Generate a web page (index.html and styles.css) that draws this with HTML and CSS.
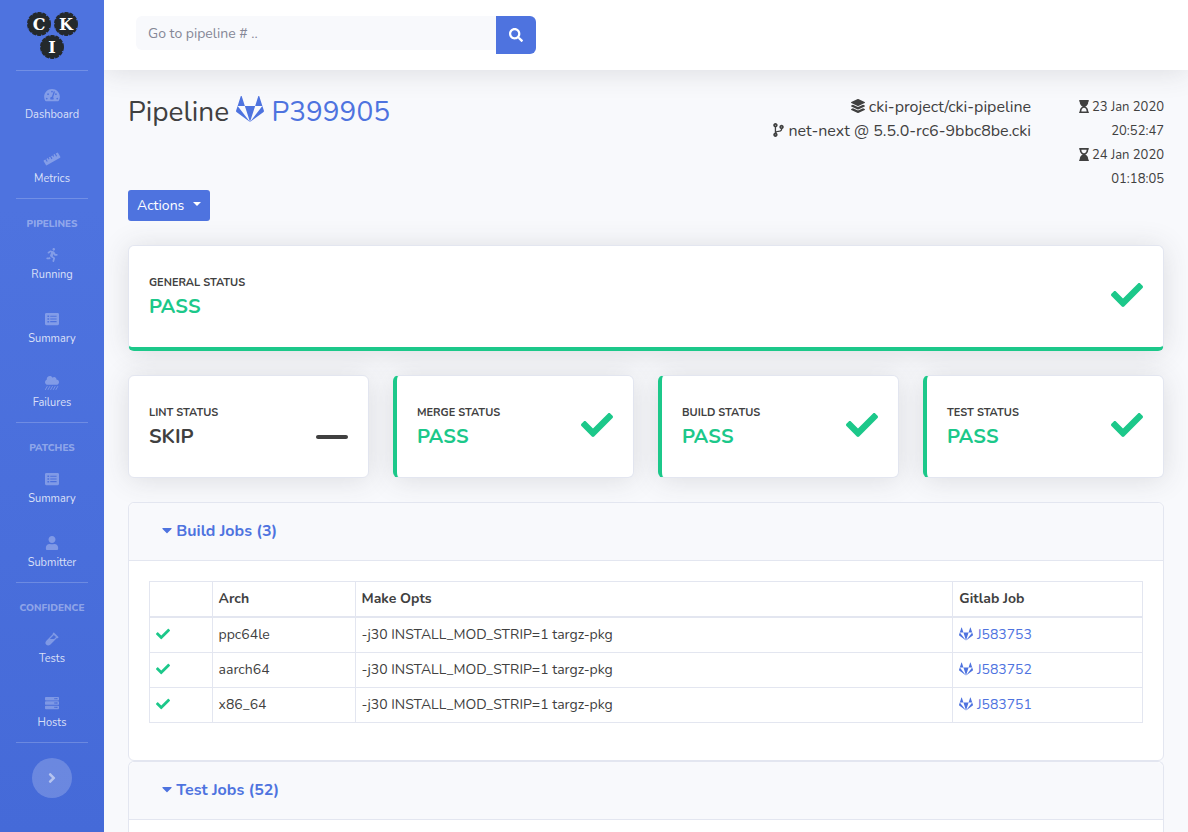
FILE: index.html
```html
<!DOCTYPE html>
<html lang="en">
<head>
    <meta charset="UTF-8">
    <meta name="viewport" content="width=device-width, initial-scale=1.0">
    <title>CKI - Pipeline P399905</title>
    <link rel="stylesheet" href="styles.css">
</head>
<body>
    <!-- Shared icons -->
    <svg class="sprite" aria-hidden="true">
        <symbol id="check" viewBox="0 0 512 512"><path d="M173.898 439.404l-166.4-166.4c-9.997-9.997-9.997-26.206 0-36.204l36.203-36.204c9.997-9.998 26.207-9.998 36.204 0L192 312.69 432.095 72.596c9.997-9.997 26.207-9.997 36.204 0l36.203 36.204c9.997 9.997 9.997 26.206 0 36.204l-294.4 294.401c-9.998 9.997-26.207 9.997-36.204-.001z"/></symbol>
        <symbol id="minimize" viewBox="0 0 512 512"><path d="M480 480H32c-17.700 0-32-14.300-32-32s14.300-32 32-32h448c17.700 0 32 14.300 32 32s-14.300 32-32 32z"/></symbol>
        <symbol id="gitlab" viewBox="0 0 512 512"><path d="M29.782 199.732L256 493.714 8.074 309.699c-6.856-5.142-9.712-13.996-7.141-21.993l28.849-87.974zm75.405-174.806c-3.142-8.854-15.709-8.854-18.851 0L29.782 199.732h131.961L105.187 24.926zm56.556 174.806L256 493.714l94.257-293.982H161.743zm349.324 87.974l-28.849-87.974L256 493.714l247.926-184.015c6.855-5.142 9.711-13.996 7.141-21.993zm-85.404-262.78c-3.142-8.854-15.709-8.854-18.851 0l-56.555 174.806h131.961L425.663 24.926z"/></symbol>
        <symbol id="caret" viewBox="0 0 320 512"><path d="M31.300 192h257.300c17.800 0 26.700 21.500 14.100 34.100L174.100 354.800c-7.800 7.800-20.500 7.800-28.300 0L17.200 226.100C4.600 213.500 13.500 192 31.300 192z"/></symbol>
        <symbol id="list" viewBox="0 0 512 512"><path fill-rule="evenodd" d="M464 480H48c-26.510 0-48-21.490-48-48V80c0-26.510 21.490-48 48-48h416c26.510 0 48 21.490 48 48v352c0 26.510-21.490 48-48 48zM88 130h64v54H88zM88 228h64v54H88zM88 326h64v54H88zM192 136h232v42H192zM192 234h232v42H192zM192 332h232v42H192z"/></symbol>
    </svg>

    <div class="wrapper">
        <nav class="sidebar">
            <a class="brand" href="#" aria-label="CKI">
                <svg width="52" height="48" viewBox="0 0 52 48">
                    <g class="brand-disc">
                        <circle cx="13" cy="12" r="11"/>
                        <circle cx="40" cy="12" r="11"/>
                        <circle cx="26" cy="35" r="11"/>
                    </g>
                    <g class="brand-letter">
                        <text x="13" y="18">C</text>
                        <text x="40" y="18">K</text>
                        <text x="26" y="41">I</text>
                    </g>
                </svg>
            </a>
            <hr>
            <a class="nav-item" href="#">
                <svg class="icon wide" viewBox="0 0 576 512"><path fill-rule="evenodd" d="M288 32C129 32 0 161 0 320c0 53 14 102 39 145 6 9 16 15 27 15h444c11 0 21-6 27-15 25-43 39-92 39-145C576 161 447 32 288 32zM288 96a32 32 0 1 1 0 64a32 32 0 1 1 0-64zM96 352a32 32 0 1 1 0 64a32 32 0 1 1 0-64zM144 192a32 32 0 1 1 0 64a32 32 0 1 1 0-64zM391 151l-61 184c21 15 28 49 13 81H233c-26-48 2-90 51-95l61-185c9-27 54-13 46 15zM432 192a32 32 0 1 1 0 64a32 32 0 1 1 0-64zM480 352a32 32 0 1 1 0 64a32 32 0 1 1 0-64z"/></svg>
                <span>Dashboard</span>
            </a>
            <a class="nav-item" href="#">
                <svg class="icon wider" viewBox="0 0 640 512"><path transform="rotate(-30 320 256)" d="M40 150h62v100h42V150h58v60h42v-60h56v100h42V150h56v60h42v-60h56v100h42V150h62q24 0 24 24v164q0 24-24 24H40q-24 0-24-24V174q0-24 24-24z"/></svg>
                <span>Metrics</span>
            </a>
            <hr>
            <div class="nav-heading">Pipelines</div>
            <a class="nav-item" href="#">
                <svg class="icon" viewBox="0 0 416 512"><path d="M272 96c26.510 0 48-21.490 48-48S298.510 0 272 0s-48 21.490-48 48 21.490 48 48 48zM113.690 317.470l-14.800 34.520H32c-17.670 0-32 14.330-32 32s14.330 32 32 32h77.450c19.250 0 36.580-11.440 44.110-29.090l8.790-20.520-10.670-6.300c-17.320-10.230-30.060-25.370-37.990-42.610zM384 223.990h-44.030l-26.060-53.250c-12.500-25.550-35.450-44.230-61.780-50.940l-71.080-21.140c-28.300-6.800-57.770-.55-80.840 17.140l-39.670 30.410c-14.030 10.750-16.690 30.830-5.920 44.860s30.840 16.660 44.860 5.920l39.690-30.410c7.670-5.890 17.440-8 25.270-6.140l14.700 4.370-37.460 87.390c-12.620 29.480-1.310 64.010 26.300 80.310l84.980 50.170-27.470 87.730c-5.280 16.860 4.110 34.820 20.970 40.090 3.190 1 6.410 1.480 9.580 1.480 13.610 0 26.230-8.770 30.520-22.450l31.640-101.060c5.910-20.770-2.890-43.080-21.640-54.390l-61.240-36.140 31.310-78.280 20.270 41.430c8 16.340 24.920 26.890 43.110 26.890H384c17.670 0 32-14.330 32-32s-14.330-31.990-32-31.990z"/></svg>
                <span>Running</span>
            </a>
            <a class="nav-item" href="#">
                <svg class="icon"><use href="#list"/></svg>
                <span>Summary</span>
            </a>
            <a class="nav-item" href="#">
                <svg class="icon" viewBox="0 0 512 512"><path d="M416 128c-.6 0-1.100.2-1.600.2 1.100-5.200 1.600-10.600 1.600-16.200 0-44.200-35.800-80-80-80-24.600 0-46.300 11.300-61 28.800C256.400 24.800 219.300 0 176 0 114.100 0 64 50.100 64 112c0 7.300.8 14.300 2.100 21.200C27.800 145.800 0 181.500 0 224c0 53 43 96 96 96h320c53 0 96-43 96-96s-43-96-96-96z"/><path class="rain" d="M80 384L16 496M176 384l-64 112M272 384l-64 112M368 384l-64 112M464 384l-64 112"/></svg>
                <span>Failures</span>
            </a>
            <hr>
            <div class="nav-heading">Patches</div>
            <a class="nav-item" href="#">
                <svg class="icon"><use href="#list"/></svg>
                <span>Summary</span>
            </a>
            <a class="nav-item" href="#">
                <svg class="icon" viewBox="0 0 448 512"><path d="M224 256c70.700 0 128-57.300 128-128S294.700 0 224 0 96 57.300 96 128s57.300 128 128 128zm89.600 32h-16.700c-22.200 10.200-46.900 16-72.900 16s-50.600-5.800-72.900-16h-16.700C60.200 288 0 348.200 0 422.400V464c0 26.500 21.500 48 48 48h352c26.500 0 48-21.500 48-48v-41.600c0-74.200-60.200-134.400-134.400-134.400z"/></svg>
                <span>Submitter</span>
            </a>
            <hr>
            <div class="nav-heading">Confidence</div>
            <a class="nav-item" href="#">
                <svg class="icon" viewBox="0 0 480 512"><path d="M477.700 186.100L309.500 18.300c-3.100-3.100-8.200-3.100-11.300 0l-34 33.900c-3.100 3.100-3.100 8.200 0 11.300l11.200 11.100L33 316.500c-38.800 38.700-45.100 102-9.400 143.500 20.600 24 49.500 36 78.400 35.900 26.400 0 52.800-10 72.900-30.100l246.300-245.700 11.200 11.100c3.100 3.100 8.200 3.100 11.300 0l34-33.900c3.100-3 3.100-8.100 0-11.200zM318 256H161l148-147.700 78.500 78.300L318 256z"/></svg>
                <span>Tests</span>
            </a>
            <a class="nav-item" href="#">
                <svg class="icon" viewBox="0 0 512 512"><path fill-rule="evenodd" d="M32 32h448q32 0 32 32v64q0 32-32 32H32q-32 0-32-32V64q0-32 32-32zM32 192h448q32 0 32 32v64q0 32-32 32H32q-32 0-32-32v-64q0-32 32-32zM32 352h448q32 0 32 32v64q0 32-32 32H32q-32 0-32-32v-64q0-32 32-32zM344 72h48v48h-48zM408 72h48v48h-48zM344 232h48v48h-48zM408 232h48v48h-48zM344 392h48v48h-48zM408 392h48v48h-48z"/></svg>
                <span>Hosts</span>
            </a>
            <hr>
            <button class="sidebar-toggle" type="button" aria-label="Toggle sidebar">
                <svg class="icon" viewBox="0 0 256 512"><path d="M224.300 273l-136 136c-9.400 9.400-24.600 9.400-33.900 0l-22.600-22.600c-9.400-9.400-9.400-24.600 0-33.900l96.400-96.400-96.400-96.400c-9.400-9.400-9.400-24.600 0-33.900L54.300 103c9.400-9.400 24.600-9.400 33.900 0l136 136c9.500 9.400 9.500 24.600.1 34z"/></svg>
            </button>
        </nav>

        <div class="content">
            <header class="topbar">
                <form class="search">
                    <input type="text" placeholder="Go to pipeline # .." aria-label="Go to pipeline">
                    <button type="submit" aria-label="Search">
                        <svg class="icon" viewBox="0 0 512 512"><path d="M505 442.700L405.300 343c-4.500-4.500-10.600-7-17-7H372c27.600-35.300 44-79.700 44-128C416 93.100 322.900 0 208 0S0 93.100 0 208s93.100 208 208 208c48.300 0 92.700-16.400 128-44v16.300c0 6.400 2.500 12.500 7 17l99.700 99.700c9.400 9.400 24.600 9.400 33.900 0l28.300-28.300c9.400-9.400 9.400-24.600.1-34zM208 336c-70.700 0-128-57.200-128-128 0-70.700 57.200-128 128-128 70.700 0 128 57.200 128 128 0 70.700-57.200 128-128 128z"/></svg>
                    </button>
                </form>
            </header>

            <main class="page">
                <div class="page-header">
                    <h1>Pipeline <a href="#"><svg class="icon"><use href="#gitlab"/></svg> P399905</a></h1>
                    <div class="project">
                        <div><svg class="icon" viewBox="0 0 512 512"><path d="M12.410 148.020l232.940 105.670c6.800 3.090 14.490 3.090 21.290 0l232.940-105.670c16.550-7.510 16.550-32.520 0-40.030L266.650 2.310a25.607 25.607 0 0 0-21.290 0L12.410 107.980c-16.550 7.510-16.550 32.530 0 40.040zm487.180 88.280l-58.090-26.330-161.640 73.270c-7.560 3.430-15.590 5.170-23.860 5.170s-16.290-1.740-23.860-5.170L70.510 209.970l-58.100 26.330c-16.550 7.500-16.550 32.500 0 40l232.940 105.590c6.800 3.080 14.490 3.080 21.290 0L499.590 276.300c16.550-7.500 16.550-32.500 0-40zm0 127.800l-57.870-26.230-161.860 73.370c-7.560 3.430-15.590 5.170-23.860 5.170s-16.290-1.740-23.860-5.170L70.290 337.870 12.410 364.100c-16.550 7.500-16.550 32.500 0 40l232.940 105.590c6.800 3.080 14.490 3.080 21.290 0L499.590 404.100c16.550-7.500 16.550-32.500 0-40z"/></svg> cki-project/cki-pipeline</div>
                        <div><svg class="icon narrow" viewBox="0 0 384 512"><path d="M384 144c0-44.200-35.800-80-80-80s-80 35.800-80 80c0 36.400 24.300 67.100 57.500 76.800-.6 16.100-4.200 28.500-11 36.900-15.400 19.200-49.300 22.400-85.200 25.700-28.200 2.600-57.400 5.400-81.300 16.900v-144c32.500-10.200 56-40.500 56-76.300 0-44.200-35.800-80-80-80S0 35.800 0 80c0 35.800 23.500 66.100 56 76.300v199.300C23.500 365.900 0 396.200 0 432c0 44.200 35.800 80 80 80s80-35.800 80-80c0-34-21.200-63.100-51.200-74.600 3.100-5.200 7.800-9.800 14.900-13.400 16.200-8.200 40.400-10.400 66.100-12.800 42.200-3.900 90-8.400 118.200-43.400 14-17.400 21.100-39.800 21.600-67.900 31.600-10.800 54.400-40.700 54.400-75.900zM80 64c8.800 0 16 7.200 16 16s-7.200 16-16 16-16-7.200-16-16 7.200-16 16-16zm0 384c-8.800 0-16-7.200-16-16s7.200-16 16-16 16 7.200 16 16-7.200 16-16 16zm224-320c8.800 0 16 7.200 16 16s-7.200 16-16 16-16-7.200-16-16 7.200-16 16-16z"/></svg> net-next @ 5.5.0-rc6-9bbc8be.cki</div>
                    </div>
                    <div class="dates">
                        <div><svg class="icon narrow" viewBox="0 0 384 512"><path fill-rule="evenodd" d="M360 0H24C10.745 0 0 10.745 0 24v16c0 13.255 10.745 24 24 24 0 90.965 51.016 167.734 120.842 192C75.016 280.266 24 357.035 24 448c-13.255 0-24 10.745-24 24v16c0 13.255 10.745 24 24 24h336c13.255 0 24-10.745 24-24v-16c0-13.255-10.745-24-24-24 0-90.965-51.016-167.734-120.842-192C308.984 231.734 360 154.965 360 64c13.255 0 24-10.745 24-24V24c0-13.255-10.745-24-24-24zm-64 448H88c0-77.458 46.204-144 104-144 57.786 0 104 66.517 104 144z"/></svg> 23 Jan 2020 20:52:47</div>
                        <div><svg class="icon narrow" viewBox="0 0 384 512"><path fill-rule="evenodd" d="M360 0H24C10.745 0 0 10.745 0 24v16c0 13.255 10.745 24 24 24 0 90.965 51.016 167.734 120.842 192C75.016 280.266 24 357.035 24 448c-13.255 0-24 10.745-24 24v16c0 13.255 10.745 24 24 24h336c13.255 0 24-10.745 24-24v-16c0-13.255-10.745-24-24-24 0-90.965-51.016-167.734-120.842-192C308.984 231.734 360 154.965 360 64c13.255 0 24-10.745 24-24V24c0-13.255-10.745-24-24-24zm-64 64c0 77.458-46.204 144-104 144-57.786 0-104-66.517-104-144h208z"/></svg> 24 Jan 2020 01:18:05</div>
                    </div>
                </div>

                <button class="actions" type="button">Actions</button>

                <div class="card status general">
                    <div>
                        <div class="label">General status</div>
                        <div class="value pass">Pass</div>
                    </div>
                    <svg class="status-icon pass"><use href="#check"/></svg>
                </div>

                <div class="status-row">
                    <div class="card status">
                        <div>
                            <div class="label">Lint status</div>
                            <div class="value">Skip</div>
                        </div>
                        <svg class="status-icon"><use href="#minimize"/></svg>
                    </div>
                    <div class="card status passed">
                        <div>
                            <div class="label">Merge status</div>
                            <div class="value pass">Pass</div>
                        </div>
                        <svg class="status-icon pass"><use href="#check"/></svg>
                    </div>
                    <div class="card status passed">
                        <div>
                            <div class="label">Build status</div>
                            <div class="value pass">Pass</div>
                        </div>
                        <svg class="status-icon pass"><use href="#check"/></svg>
                    </div>
                    <div class="card status passed">
                        <div>
                            <div class="label">Test status</div>
                            <div class="value pass">Pass</div>
                        </div>
                        <svg class="status-icon pass"><use href="#check"/></svg>
                    </div>
                </div>

                <section class="card jobs">
                    <h2 class="card-header"><a href="#"><svg class="icon caret"><use href="#caret"/></svg> Build Jobs (3)</a></h2>
                    <div class="card-body">
                        <table>
                            <thead>
                                <tr>
                                    <th class="col-result"></th>
                                    <th class="col-arch">Arch</th>
                                    <th>Make Opts</th>
                                    <th class="col-job">Gitlab Job</th>
                                </tr>
                            </thead>
                            <tbody>
                                <tr>
                                    <td><svg class="icon pass"><use href="#check"/></svg></td>
                                    <td>ppc64le</td>
                                    <td>-j30 INSTALL_MOD_STRIP=1 targz-pkg</td>
                                    <td><a href="#"><svg class="icon"><use href="#gitlab"/></svg> J583753</a></td>
                                </tr>
                                <tr>
                                    <td><svg class="icon pass"><use href="#check"/></svg></td>
                                    <td>aarch64</td>
                                    <td>-j30 INSTALL_MOD_STRIP=1 targz-pkg</td>
                                    <td><a href="#"><svg class="icon"><use href="#gitlab"/></svg> J583752</a></td>
                                </tr>
                                <tr>
                                    <td><svg class="icon pass"><use href="#check"/></svg></td>
                                    <td>x86_64</td>
                                    <td>-j30 INSTALL_MOD_STRIP=1 targz-pkg</td>
                                    <td><a href="#"><svg class="icon"><use href="#gitlab"/></svg> J583751</a></td>
                                </tr>
                            </tbody>
                        </table>
                    </div>
                </section>

                <section class="card jobs last">
                    <h2 class="card-header"><a href="#"><svg class="icon caret"><use href="#caret"/></svg> Test Jobs (52)</a></h2>
                </section>
            </main>
        </div>
    </div>
</body>
</html>
```
FILE: styles.css
```css
* {
    box-sizing: border-box;
}
body {
    margin: 0;
    font-family: Nunito, Lato, sans-serif;
    font-size: 16px;
    line-height: 24px;
    color: #404040;
    background: #f8f9fc;
}
a {
    color: #4e73df;
    text-decoration: none;
}
button, input {
    font-family: inherit;
    border: none;
}
.sprite {
    display: none;
}
.icon {
    width: 1em;
    height: 1em;
    fill: currentColor;
    vertical-align: -2px;
}
.icon.narrow {
    width: 10px;
}
.pass {
    color: #1cc88a;
}
.wrapper {
    display: flex;
    min-height: 100vh;
}

/* Sidebar */
.sidebar {
    position: relative;
    z-index: 1;
    display: flex;
    flex-direction: column;
    align-items: center;
    flex: 0 0 104px;
    background: linear-gradient(180deg, #4e73df 25%, #456ad8 100%);
}
.sidebar hr {
    width: 72px;
    margin: -1px 0 0;
    border: none;
    border-top: 1px solid rgba(255, 255, 255, 0.2);
}
.brand {
    display: flex;
    align-items: center;
    height: 71px;
}
.brand-disc {
    fill: #24292c;
    stroke: #24292c;
    stroke-width: 2;
    stroke-dasharray: 4 1;
}
.brand-letter {
    font-family: "DejaVu Serif", serif;
    font-size: 16px;
    font-weight: bold;
    fill: #fff;
    text-anchor: middle;
}
.nav-item {
    display: flex;
    flex-direction: column;
    align-items: center;
    gap: 4px;
    height: 64px;
    padding-top: 17px;
    font-size: 11px;
    line-height: 18px;
    color: rgba(255, 255, 255, 0.8);
}
.nav-item .icon {
    width: 14px;
    height: 14px;
    color: rgba(255, 255, 255, 0.3);
}
.nav-item .icon.wide {
    width: 16px;
}
.nav-item .icon.wider {
    width: 18px;
}
.rain {
    stroke: currentColor;
    stroke-width: 32;
    stroke-linecap: round;
}
.nav-heading {
    height: 32px;
    padding-top: 16px;
    font-size: 10px;
    line-height: 18px;
    font-weight: 800;
    text-transform: uppercase;
    color: rgba(255, 255, 255, 0.4);
}
.sidebar-toggle {
    display: flex;
    align-items: center;
    justify-content: center;
    width: 40px;
    height: 40px;
    margin: 15px 0;
    padding: 0;
    font-size: 16px;
    color: rgba(255, 255, 255, 0.5);
    background: rgba(255, 255, 255, 0.2);
    border-radius: 50%;
}

/* Top bar */
.content {
    display: flex;
    flex-direction: column;
    flex: 1;
    min-width: 0;
}
.topbar {
    height: 70px;
    padding: 16px 32px;
    background: #fff;
    box-shadow: 0 2px 28px rgba(58, 59, 69, 0.15);
}
.search {
    display: flex;
    align-items: flex-start;
    max-width: 400px;
}
.search input {
    flex: 1;
    min-width: 0;
    height: 34px;
    padding: 0 12px;
    font-size: 14px;
    background: #f8f9fc;
    border-radius: 6px 0 0 6px;
}
.search input::placeholder {
    color: #858796;
}
.search button {
    width: 40px;
    height: 38px;
    padding: 0;
    font-size: 14px;
    color: #fff;
    background: #4e73df;
    border-radius: 0 6px 6px 0;
}

/* Page */
.page {
    display: flex;
    flex-direction: column;
    flex: 1;
    padding: 25px 24px 0;
}
.page-header {
    display: flex;
    min-height: 95px;
}
h1 {
    flex: 1;
    margin: 0;
    font-size: 28px;
    line-height: 34px;
    font-weight: normal;
}
.project {
    text-align: right;
}
.project .icon {
    width: 14px;
    height: 14px;
    vertical-align: -1px;
}
.project .icon.narrow {
    width: 11px;
}
.dates {
    width: 109px;
    height: 95px;
    margin-left: 24px;
    padding-left: 20px;
    font-size: 13px;
    text-align: right;
}
.actions {
    align-self: flex-start;
    height: 31px;
    padding: 0 9px;
    font-size: 14px;
    color: #fff;
    background: #4e73df;
    border-radius: 3px;
}
.actions::after {
    content: "";
    display: inline-block;
    margin-left: 9px;
    vertical-align: 4px;
    border-top: 4px solid;
    border-right: 4px solid transparent;
    border-left: 4px solid transparent;
}
.card {
    background: #fff;
    border: 1px solid #e3e6f0;
    border-radius: 6px;
}
.status {
    display: flex;
    align-items: center;
    justify-content: space-between;
    padding: 29px 20px 28px;
    box-shadow: 0 2px 28px rgba(58, 59, 69, 0.15);
}
.general {
    margin-top: 24px;
    border-bottom: 4px solid #1cc88a;
}
.passed {
    border-left: 4px solid #1cc88a;
}
.status-row {
    display: grid;
    grid-template-columns: repeat(4, 1fr);
    gap: 24px;
    margin: 24px 0;
}
.label {
    margin-bottom: 4px;
    font-size: 11px;
    line-height: 16px;
    font-weight: bold;
    text-transform: uppercase;
}
.value {
    font-size: 20px;
    line-height: 24px;
    font-weight: bold;
    text-transform: uppercase;
}
.status-icon {
    width: 32px;
    height: 32px;
    margin-bottom: 4px;
    fill: currentColor;
}

/* Job lists */
.card-header {
    margin: 0;
    padding: 16px 33px 17px;
    font-size: 16px;
    font-weight: bold;
    background: #f8f9fc;
    border-bottom: 1px solid #e3e6f0;
    border-radius: 6px 6px 0 0;
}
.icon.caret {
    width: 10px;
}
.card-body {
    padding: 20px 20px 37px;
}
.last {
    flex: 1;
    border-bottom: none;
    border-radius: 6px 6px 0 0;
}
table {
    width: 100%;
    table-layout: fixed;
    border-collapse: collapse;
    font-size: 14px;
    line-height: 24px;
}
th, td {
    padding: 5px 6px;
    text-align: left;
    border: 1px solid #e3e6f0;
}
th {
    height: 35px;
    border-bottom-width: 2px;
}
.col-result {
    width: 6.3%;
}
.col-arch {
    width: 14.4%;
}
.col-job {
    width: 19.1%;
}
```
